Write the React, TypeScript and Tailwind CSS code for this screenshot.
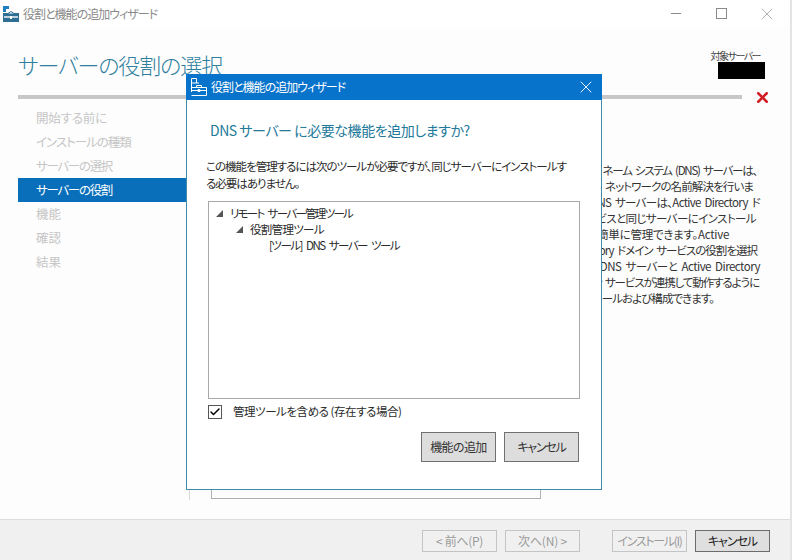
import React from 'react';
import { X, Check } from 'lucide-react';

const font = "font-['Noto_Sans_CJK_JP','Liberation_Sans',sans-serif] [font-feature-settings:'palt']";

const steps = [
  { label: '開始する前に', track: 'tracking-[-0.2px]' },
  { label: 'インストールの種類', track: 'tracking-[-1px]' },
  { label: 'サーバーの選択', track: 'tracking-[-1.3px]' },
  { label: 'サーバーの役割', track: 'tracking-[-1.3px]' },
  { label: '機能', track: 'tracking-[0px]' },
  { label: '確認', track: 'tracking-[0px]' },
  { label: '結果', track: 'tracking-[0px]' },
];

const description = [
  { text: 'ドメイン ネーム システム (DNS) サーバーは、', className: 'w-[467px] tracking-[-1.25px]' },
  { text: 'TCP/IP ネットワークの名前解決を行いま', className: 'w-[463px] tracking-[-0.9px]' },
  { text: 'す。DNS サーバーは、Active Directory ド', className: 'w-[470px] tracking-[-0.7px]' },
  { text: 'メイン サービスと同じサーバーにインストール', className: 'w-[466px] tracking-[-0.6px]' },
  { text: 'すると簡単に管理できます。Active', className: 'w-[439px] tracking-[-0.25px]' },
  { text: 'Directory ドメイン サービスの役割を選択', className: 'w-[467px] tracking-[-1px]' },
  { text: 'すると、DNS サーバーと Active Directory', className: 'w-[470px] tracking-[-0.5px]' },
  { text: 'ドメイン サービスが連携して動作するように', className: 'w-[469px] tracking-[-1.1px]' },
  { text: 'DNS サーバーをインストールおよび構成できます。', className: 'w-[424px] tracking-[-0.95px]' },
];

const RoleIcon: React.FC<{ light?: boolean }> = ({ light }) => {
  if (light) {
    return (
      <svg width="18" height="20" viewBox="0 0 18 20" fill="none" stroke="#ffffff" strokeWidth="1">
        <path d="M1.5 15V1.5H6.5V6" />
        <path d="M1.5 6H9" />
        <path d="M1.5 18.5H16.5V10.5H1.5V15" />
        <path d="M1.5 13.5H16.5" />
        <path d="M6.5 10.5V8.5H11.5V10.5" />
        <path d="M8 12.5H10V14.5H8Z" />
      </svg>
    );
  }
  return (
    <svg width="18" height="20" viewBox="0 0 18 20">
      <path d="M1 2H7V5H4V8H1Z" fill="#1f7fc0" />
      <path d="M1 9H17V18H1Z" fill="#2f6f93" />
      <path d="M5 10L9 7.5L13 10Z" fill="#ffffff" stroke="#2f6f93" strokeWidth="1" />
      <path d="M2 13H16" stroke="#ffffff" strokeWidth="1.4" />
      <path d="M8 12H10V15H8Z" fill="#ffffff" />
    </svg>
  );
};

const TreeArrow = () => <span className="w-0 h-0 border-l-[7px] border-l-transparent border-b-[7px] border-b-[#555555]" />;

const FooterButton: React.FC<{ label: string; disabled?: boolean; className?: string }> = ({ label, disabled, className }) => (
  <button
    className={`w-[75px] h-[22px] border text-[12px] whitespace-nowrap flex items-center justify-center ${
      disabled ? 'border-[#c4c4c4] bg-[#f0f0f0] text-[#9b9b9b]' : 'border-[#6c6c6c] bg-[#dfdfdf] text-[#222222]'
    } ${className ?? ''}`}
  >
    {label}
  </button>
);

const AddFeaturesDialog = () => (
  <div className="absolute left-[186px] top-[74px] w-[416px] h-[416px] bg-white border border-[#3f8ba8] flex flex-col">
    <div className="-mx-px -mt-px h-[26px] bg-[#0873cb] flex items-center pl-[4px] pr-[6px] text-white">
      <RoleIcon light />
      <span className="ml-[3px] text-[12px] tracking-[-1px]">役割と機能の追加ウィザード</span>
      <X className="ml-auto w-[20px] h-[20px]" strokeWidth={1.1} />
    </div>
    <div className="flex-1 flex flex-col pl-[21px] pr-[21px]">
      <h2 className="mt-[19px] pl-[2px] text-[14px] leading-[22px] tracking-[-0.45px] text-[#23799a] font-normal">
        DNS サーバー に必要な機能を追加しますか?
      </h2>
      <p className="mt-[17px] -ml-[2px] text-[11.5px] leading-[17px] tracking-[-1px] text-[#2a2a2a] whitespace-nowrap">
        この機能を管理するには次のツールが必要ですが、同じサーバーにインストールす
        <br />
        る必要はありません。
      </p>
      <div className="mt-[9px] h-[198px] border border-[#a9a9a9] text-[11.5px] leading-[16px] text-[#2a2a2a] pt-[3px] [word-spacing:3px]">
        <div className="flex items-center pl-[7px] gap-[7px] h-[16px]">
          <TreeArrow />
          <span className="tracking-[-1.7px]">リモート サーバー管理ツール</span>
        </div>
        <div className="flex items-center pl-[27px] gap-[7px] h-[16px]">
          <TreeArrow />
          <span className="tracking-[-0.7px]">役割管理ツール</span>
        </div>
        <div className="pl-[60px] h-[16px] tracking-[-1.5px]">[ツール] DNS サーバー ツール</div>
      </div>
      <label className="mt-[5px] flex items-center h-[15px] text-[11.5px] tracking-[-0.45px] text-[#2a2a2a]">
        <span className="w-[14px] h-[14px] border border-[#555555] bg-white flex items-center justify-center">
          <Check className="w-[12px] h-[12px] text-black" strokeWidth={3} />
        </span>
        <span className="ml-[11px]">管理ツールを含める (存在する場合)</span>
      </label>
      <div className="mt-[13px] pr-px flex justify-end gap-[8px]">
        <button className="w-[75px] h-[30px] border border-[#707070] bg-[#dddddd] text-[12px] tracking-[-0.6px] text-[#333333]">機能の追加</button>
        <button className="w-[75px] h-[30px] border border-[#707070] bg-[#dddddd] text-[12px] tracking-[-1.2px] text-[#333333]">キャンセル</button>
      </div>
    </div>
  </div>
);

export default function App() {
  return (
    <div className={`relative w-[792px] h-[560px] overflow-hidden bg-[#fdfdfd] flex flex-col border-r-2 border-r-[#e4e4e4] ${font}`}>
      {/* title bar */}
      <div className="h-[27px] shrink-0 bg-white flex items-center pl-[2px] pr-[13px]">
        <RoleIcon />
        <span className="ml-[3px] text-[12px] tracking-[-1px] text-[#8a8a8a]">役割と機能の追加ウィザード</span>
        <div className="ml-auto flex items-center text-[#8a8a8a]">
          <span className="w-[10px] h-px bg-[#8a8a8a]" />
          <span className="ml-[35px] w-[11px] h-[11px] border border-[#8a8a8a]" />
          <X className="ml-[30px] w-[20px] h-[20px]" strokeWidth={0.8} />
        </div>
      </div>

      {/* page header */}
      <div className="h-[74px] shrink-0 pl-[18px] pr-[25px] flex flex-col">
        <div className="flex justify-between">
          <h1 className="mt-[20px] text-[22px] leading-[34px] tracking-[-1.1px] text-[#2f7f9d] font-extralight">サーバーの役割の選択</h1>
          <div className="mt-[23px] flex flex-col items-end">
            <span className="text-[10px] leading-[12px] tracking-[-1.5px] text-[#444444] pr-[5px]">対象サーバー</span>
            <span className="w-[47px] h-[17px] bg-black" />
          </div>
        </div>
        <div className="flex items-center">
          <div className="mt-[-14px] w-[724px] shrink-0 h-[4px] bg-[#c8c8c8] translate-y-[21px]" />
          <X className="ml-[12px] mt-[-14px] translate-y-[22px] shrink-0 w-[17px] h-[17px] text-[#d11f26]" strokeWidth={3.6} />
        </div>
      </div>

      {/* body */}
      <div className="flex-1 flex min-h-0">
        <nav className="w-[172px] ml-[18px] pt-[5px] shrink-0 flex flex-col border-r border-[#d9d9d9] mb-[19px]">
          {steps.map((step) => (
            <div
              key={step.label}
              className={`h-[24px] pl-[18px] flex items-center text-[12.5px] ${step.track} ${
                step.label === 'サーバーの役割' ? 'bg-[#0a6fbb] text-white' : 'text-[#c6c6c6]'
              }`}
            >
              {step.label}
            </div>
          ))}
        </nav>
        <div className="flex-1 relative">
          <div className="ml-[21px] mt-[8px] h-[390px] w-[330px] border border-[#b0b0b0]" />
        </div>
        <div className="absolute left-[290px] top-[162px] text-[11.5px] leading-[16px] text-[#333333] [word-spacing:2px]">
          {description.map((line) => (
            <div key={line.text} className={`${line.className} whitespace-nowrap h-[16px] flex justify-end`}>
              {line.text}
            </div>
          ))}
        </div>
      </div>

      {/* footer */}
      <div className="h-[41px] shrink-0 bg-[#f0f0f0] border-t border-[#dcdcdc] flex items-start pt-[10px] pl-[422px]">
        <FooterButton label="< 前へ(P)" disabled className="tracking-[-0.3px]" />
        <FooterButton label="次へ(N) >" disabled className="ml-[8px] tracking-[-0.2px]" />
        <FooterButton label="インストール(I)" disabled className="ml-[32px] tracking-[-1.3px]" />
        <FooterButton label="キャンセル" className="ml-[8px] tracking-[-1px]" />
      </div>

      <AddFeaturesDialog />
    </div>
  );
}
